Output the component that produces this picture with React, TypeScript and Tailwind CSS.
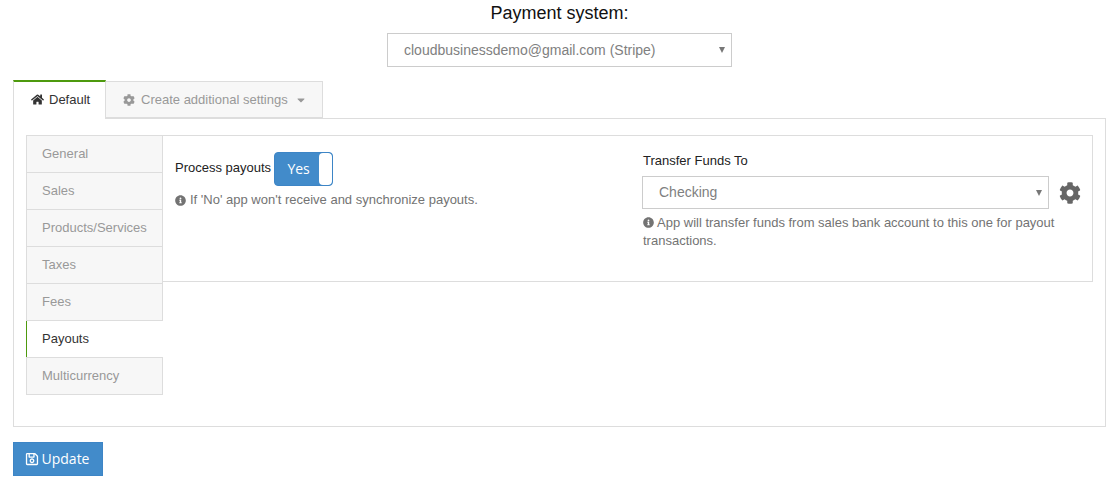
import { FaCog, FaHome, FaInfoCircle, FaRegSave, FaCaretDown } from "react-icons/fa";

const sideTabs = ["General", "Sales", "Products/Services", "Taxes", "Fees", "Payouts", "Multicurrency"];

function Arrow() {
    return <span className="w-0 h-0 border-x-[3.5px] border-x-transparent border-t-[6px] border-t-[#777]" />;
}

function FakeSelect({ label, className }: { label: string; className: string }) {
    return (
        <div className={`flex items-center justify-between border border-[#ccc] bg-white text-[14px] text-[#808080] ${className}`}>
            <span>{label}</span>
            <Arrow />
        </div>
    );
}

export default function App() {
    return (
        <div className="w-[1112px] h-[489px] overflow-hidden bg-white px-[13px] pr-[6px] font-['Liberation_Sans',Arial,sans-serif] text-[13px] text-[#333]">
            <div className="flex flex-col items-center">
                <h2 className="h-[33px] pt-[2px] text-[18px] leading-[22px] text-[#111]">Payment system:</h2>
                <FakeSelect label="cloudbusinessdemo@gmail.com (Stripe)" className="w-[345px] h-[34px] pl-[16px] pr-[6px]" />
            </div>

            <div className="mt-[13px] flex h-[39px] items-stretch">
                <div className="relative z-10 flex h-[39px] w-[93px] items-center gap-[5px] border-x border-[#ddd] border-t-2 border-t-[#4e9a0e] bg-white pb-[2px] pl-[17px]">
                    <FaHome className="text-[13px] text-[#333]" />
                    <span className="text-[#333]">Default</span>
                </div>
                <div className="-ml-px mt-[1px] flex h-[37px] w-[218px] items-center gap-[6px] border border-[#ddd] bg-[#f7f7f7] pl-[17px] text-[#999]">
                    <FaCog className="text-[12px]" />
                    <span>Create additional settings</span>
                    <FaCaretDown className="ml-[1px] text-[12px]" />
                </div>
            </div>

            <div className="-mt-px flex h-[309px] w-[1093px] items-start border border-[#ddd] pl-[12px] pr-[12px] pt-[16px]">
                <div className="w-[137px] shrink-0">
                    {sideTabs.map((tab) =>
                        tab === "Payouts" ? (
                            <div key={tab} className="relative z-10 -mr-px flex h-[37px] items-center border-l border-l-[#4e9a0e] bg-white pb-[2px] pl-[15px] text-[#333]">
                                {tab}
                            </div>
                        ) : (
                            <div key={tab} className="relative z-20 -mt-px flex h-[38px] items-center border border-[#ddd] bg-[#f7f7f7] pl-[15px] text-[#999] first:mt-0">
                                {tab}
                            </div>
                        )
                    )}
                </div>

                <div className="-ml-px flex h-[147px] w-[931px] border border-[#ddd] pl-[12px]">
                    <div className="w-[467px] pt-[16px]">
                        <div className="flex items-center gap-[3px]">
                            <span className="-mt-[3px] text-[#222]">Process payouts</span>
                            <div className="flex h-[34px] w-[59px] overflow-hidden rounded-[4px] border border-[#3d85c6] bg-[#428bca]">
                                <span className="flex w-[44px] items-center justify-center pb-[1px] pl-[3px] font-['Open_Sans',sans-serif] text-[14px] text-white">Yes</span>
                                <span className="flex-1 rounded-[4px] bg-white" />
                            </div>
                        </div>
                        <p className="mt-[5px] flex items-center gap-[4px] leading-[18px] text-[#737373]">
                            <FaInfoCircle className="text-[11px]" />
                            If 'No' app won't receive and synchronize payouts.
                        </p>
                    </div>

                    <div className="pt-[16px]">
                        <div className="pl-px leading-[18px] text-[#222]">Transfer Funds To</div>
                        <div className="mt-[6px] flex items-center gap-[10px]">
                            <FakeSelect label="Checking" className="w-[407px] h-[33px] pl-[16px] pr-[6px]" />
                            <FaCog className="text-[22px] text-[#666]" />
                        </div>
                        <p className="mt-[5px] w-[430px] pl-px leading-[18px] text-[#737373]">
                            <FaInfoCircle className="mr-[3px] inline align-[-1px] text-[11px]" />
                            App will transfer funds from sales bank account to this one for payout transactions.
                        </p>
                    </div>
                </div>
            </div>

            <button className="mt-[15px] flex h-[34px] w-[90px] items-center justify-center gap-[3px] border border-[#3d85c6] bg-[#428bca] pb-[1px] pr-[2px] font-['Open_Sans',sans-serif] text-[14px] text-white">
                <FaRegSave className="text-[14px]" />
                Update
            </button>
        </div>
    );
}
